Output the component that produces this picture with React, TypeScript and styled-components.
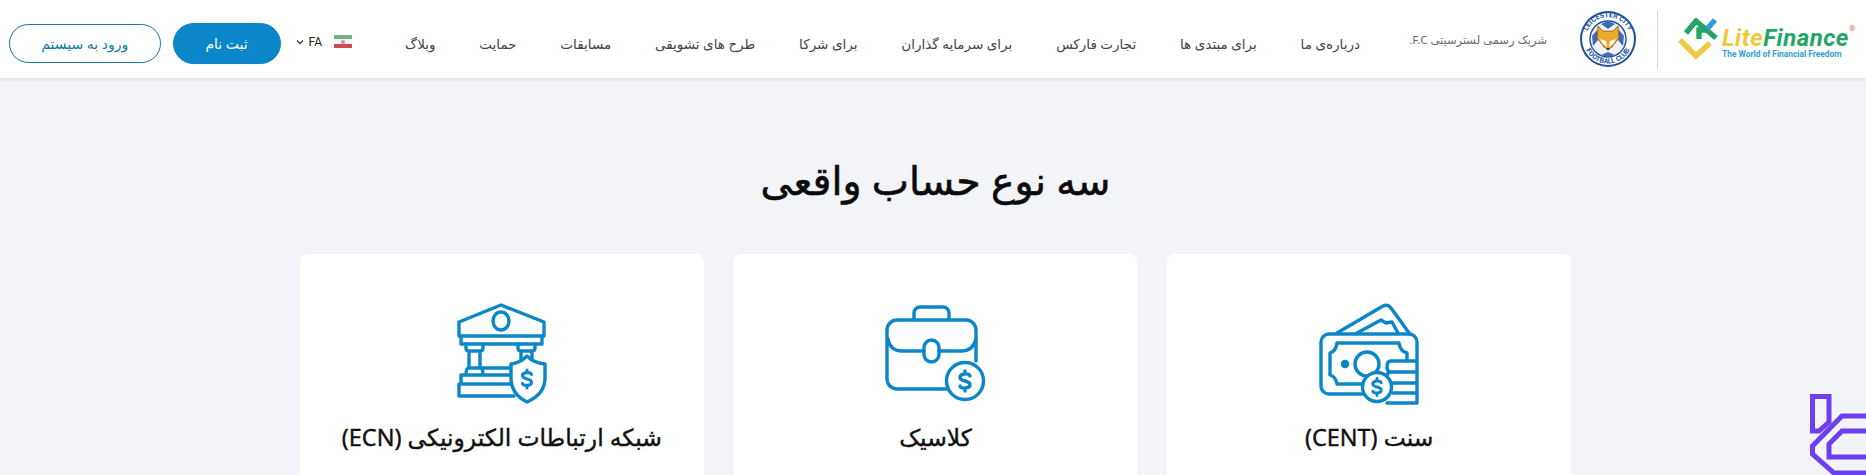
import React from 'react';
import styled, {createGlobalStyle} from 'styled-components';

const BLUE = '#0b86c8';
const ARABIC = '"Noto Sans", "DejaVu Sans", "Liberation Sans", sans-serif';

const GlobalStyle = createGlobalStyle`
  html, body {
    margin: 0;
    height: 475px;
    overflow: hidden;
    background: #f2f4f8;
    font-family: ${ARABIC};
  }
`;

const Page = styled.div`
  position: relative;
  width: 1866px;
  height: 475px;
  overflow: hidden;
  direction: rtl;
`;

const Header = styled.header`
  height: 78px;
  box-sizing: border-box;
  padding: 0 16px 0 9px;
  background: #fff;
  box-shadow: 0 1px 5px rgba(40, 50, 70, 0.12);
  display: flex;
  align-items: center;
`;

const Brand = styled.a`
  direction: ltr;
  display: flex;
  align-items: center;
  gap: 2px;
  width: 172px;
  height: 41px;
`;

const BrandText = styled.div`
  display: flex;
  flex-direction: column;
  font-family: Roboto, "Liberation Sans", sans-serif;
  margin-top: 8px;
`;

const BrandName = styled.div`
  font-size: 24px;
  line-height: 22px;
  font-weight: 700;
  font-style: italic;
  letter-spacing: 0.5px;
  color: #23a566;
  white-space: nowrap;
  display: flex;

  span {
    color: #f0c83c;
  }

  sup {
    font-size: 8px;
    line-height: 8px;
    font-style: normal;
    font-weight: 400;
    color: #e2604f;
    margin: -2px 0 0 0;
    letter-spacing: 0;
  }
`;

const BrandSlogan = styled.div`
  font-size: 8.4px;
  line-height: 11px;
  font-weight: 700;
  color: #2f9ed8;
  white-space: nowrap;
`;

const Divider = styled.div`
  width: 1px;
  height: 59px;
  margin: 0 20px;
  background: #d8d8d8;
`;

const Sponsor = styled.div`
  display: flex;
  align-items: center;
  gap: 32px;
  width: 198px;
`;

const SponsorText = styled.span`
  font-size: 11.5px;
  color: #6a6a6a;
  white-space: nowrap;
`;

const Nav = styled.nav`
  flex: 0 0 955px;
  margin: 9px 79px 0 0;
  display: flex;
  justify-content: space-between;
`;

const NavLink = styled.a`
  font-size: 13.5px;
  color: #444;
  white-space: nowrap;
`;

const Lang = styled.div`
  direction: ltr;
  display: flex;
  align-items: center;
  gap: 5px;
  margin: 5px 53px 0 0;
  font-size: 12px;
  font-family: Roboto, "Liberation Sans", sans-serif;
  font-weight: 400;
  color: #222;
`;

const Flag = styled.div`
  position: relative;
  width: 18px;
  height: 13px;
  margin-left: 7px;
  background: linear-gradient(#6fb088 0 33%, #f8f4f4 33% 66%, #cf4a55 66%);

  &::after {
    content: '';
    position: absolute;
    left: 7px;
    top: 4.5px;
    width: 4px;
    height: 4px;
    border-radius: 50%;
    background: #e58a92;
  }
`;

const Button = styled.a<{$solid?: boolean}>`
  box-sizing: border-box;
  display: flex;
  align-items: center;
  justify-content: center;
  white-space: nowrap;
  border-radius: 21px;
  font-size: 14px;
  height: ${p => (p.$solid ? 41 : 39)}px;
  width: ${p => (p.$solid ? 109 : 153)}px;
  margin: 9px ${p => (p.$solid ? 15 : 12)}px 0 0;
  background: ${p => (p.$solid ? BLUE : '#fff')};
  color: ${p => (p.$solid ? '#fff' : '#1278a8')};
  border: 1px solid ${p => (p.$solid ? BLUE : '#1278a8')};
`;

const Main = styled.main`
  padding: 0 295px 0 300px;
`;

const Heading = styled.h1`
  margin: 0;
  padding-top: 75px;
  height: 101px;
  font-size: 39.5px;
  line-height: 54px;
  font-weight: 400;
  -webkit-text-stroke: 0.6px #0b0b0b;
  text-align: center;
  color: #0b0b0b;
`;

const Cards = styled.div`
  display: grid;
  grid-template-columns: repeat(3, 1fr);
  gap: 30px;
`;

const Card = styled.section`
  height: 320px;
  padding-top: 50px;
  box-sizing: border-box;
  background: #fff;
  border-radius: 8px 8px 0 0;
  display: flex;
  flex-direction: column;
  align-items: center;
`;

const IconSlot = styled.div`
  height: 100px;
  display: flex;
  align-items: center;
  justify-content: center;
`;

const CardTitle = styled.h2`
  margin: 18px 0 0;
  font-size: 23.4px;
  line-height: 30px;
  font-weight: 400;
  -webkit-text-stroke: 0.4px #111;
  color: #111;
  white-space: nowrap;
`;

const IconSvg = styled.svg`
  fill: none;
  stroke: ${BLUE};
  stroke-width: 3.4;
  stroke-linejoin: round;
  stroke-linecap: round;
  display: block;
  overflow: visible;
`;

const Corner = styled.svg`
  position: absolute;
  right: 0;
  bottom: 0;
  fill: none;
  stroke: #6d3ff0;
  stroke-width: 5;
`;

const Dollar = ({x, y, s = 1}: {x: number; y: number; s?: number}) => (
  <g transform={`translate(${x} ${y}) scale(${s})`}>
    <path d="M5 -5 C4 -8 -5 -8 -5 -3.5 C-5 1 5 -1 5 3.5 C5 8 -4 8 -5 5 M0 -10 V-7 M0 7 V10" />
  </g>
);

const CentIcon = () => (
  <IconSvg width="100" height="100" viewBox="0 0 100 100">
    <path d="M18 29 L64 2 Q68 0 71 3 Q73 5 90 29" />
    <path d="M38 29 L62 16 L67 19 L73 18 L79 29" />
    <path d="M47 90 H10 a8 8 0 0 1 -8 -8 V38 a8 8 0 0 1 8 -8 H90 a8 8 0 0 1 8 8 V57" />
    <path d="M47 80 H18 Q17 73 11 71 V49 Q17 47 18 39 H80 Q81 47 88 49 V57" />
    <circle cx="48" cy="60" r="12" />
    <circle cx="26" cy="60" r="2.6" fill={BLUE} />
    <path d="M98 57 H72 Q68 57 68 62.5 Q68 68 72 68 H98 V57 M72 68 Q68 68 68 73 M98 68 V79 H73 M98 79 V89 H74 M98 89 V99 H68" />
    <circle cx="58" cy="83" r="14.5" fill="#fff" />
    <Dollar x={58} y={83} s={0.85} />
  </IconSvg>
);

const CaseIcon = () => (
  <IconSvg width="100" height="96" viewBox="0 0 100 96">
    <path d="M28 13 V7 a6 6 0 0 1 6 -6 H57 a6 6 0 0 1 6 6 V13" />
    <path d="M60 83 H11 a10 10 0 0 1 -10 -10 V24 a10 10 0 0 1 10 -10 H80 a10 10 0 0 1 10 10 V55" />
    <path d="M2 33 Q4 45 16 45 H38 M53 45 H75 Q87 45 90 33" />
    <rect x="38" y="34" width="15" height="22" rx="7.5" />
    <circle cx="79" cy="75" r="18.5" fill="#fff" />
    <Dollar x={79} y={75} s={1} />
  </IconSvg>
);

const BankIcon = () => (
  <IconSvg width="88" height="100" viewBox="0 0 88 100">
    <path d="M43 1 L1 18 V32 H86 V18 Z" />
    <ellipse cx="43" cy="17" rx="8" ry="9" />
    <path d="M3 32 V40 H84 V32" />
    <path d="M8 40 V44 Q8 47 11 47 H22 Q25 47 25 44 V40 M11 47 V64 M22 47 V64" />
    <path d="M60 40 V44 Q60 47 63 47 H74 Q77 47 77 44 V40 M63 47 V56 M74 47 V54" />
    <path d="M53 64 H11 Q8 64 8 71 M22 64 Q25 64 25 71 M3 80 V71 H53 M1 80 H56 M1 80 V92 H56" />
    <path d="M69 52 Q62 59 53 60 V74 Q53 90 69 98 Q87 90 87 74 V60 Q76 59 69 52 Z" fill="#fff" />
    <Dollar x={69} y={75} s={0.9} />
  </IconSvg>
);

const LiteMark = () => (
  <svg width="42" height="42" viewBox="0 0 42 42" fill="none" strokeWidth="5.4" style={{flex: 'none'}}>
    <path d="M2 22 L18 38 L32 25" stroke="#f2c744" />
    <path d="M8 15 L18 3 L38 20" stroke="#22a566" />
    <path d="M21 21 V12 H32" stroke="#22a566" />
    <path d="M29 11 L37 2" stroke="#2f9ed8" />
  </svg>
);

const FoxBadge = () => (
  <svg width="58" height="58" viewBox="0 0 58 58" style={{flex: 'none'}}>
    <defs>
      <path id="arcTop" d="M7 29 A22 22 0 0 1 51 29" />
      <path id="arcBottom" d="M4.5 29 A24.5 24.5 0 0 0 53.5 29" />
    </defs>
    <circle cx="29" cy="29" r="28" fill="#1d4f9f" />
    <circle cx="29" cy="29" r="26" fill="#fff" />
    <circle cx="29" cy="29" r="18" fill="#f2f4f8" stroke="#1d4f9f" strokeWidth="1.4" />
    <path d="M29 11 L36 14 L29 19 L22 14 Z M13 26 L18 20 L19 30 L14 36 Z M45 26 L40 20 L39 30 L44 36 Z M22 45 L29 42 L36 45 L29 47 Z" fill="#3b6db5" />
    <text fontFamily="Roboto, sans-serif" fontSize="7" fontWeight="700" fill="#1d4f9f" textAnchor="middle">
      <textPath href="#arcTop" startOffset="50%">LEICESTER CITY</textPath>
    </text>
    <text fontFamily="Roboto, sans-serif" fontSize="7" fontWeight="700" fill="#1d4f9f" textAnchor="middle">
      <textPath href="#arcBottom" startOffset="50%">FOOTBALL CLUB</textPath>
    </text>
    <path d="M19 16 L24 21 H34 L39 16 L40 28 L33 37 L29 40 L25 37 L18 28 Z" fill="#eca72c" stroke="#7a4a12" strokeWidth="0.7" />
    <path d="M21 29 L27 31 L28 37 L24 34 Z M37 29 L31 31 L30 37 L34 34 Z" fill="#fff" />
    <path d="M27.5 38 H30.5 L29 40.5 Z" fill="#222" />
  </svg>
);

const CornerLogo = () => (
  <Corner width="56" height="81" viewBox="0 0 56 81">
    <path d="M2.5 2.5 H19 V28 L9 37 H2.5 Z" />
    <path d="M56 22 H32 L2.5 52 V60 L24 79 H56" />
    <path d="M56 37 H32 L19 50 V63 H56" />
  </Corner>
);

const NAV_ITEMS = [
  'درباره‌ی ما',
  'برای مبتدی ها',
  'تجارت فارکس',
  'برای سرمایه گذاران',
  'برای شرکا',
  'طرح های تشویقی',
  'مسابقات',
  'حمایت',
  'وبلاگ',
];

const App = () => {
  return (
    <Page>
      <GlobalStyle />
      <Header>
        <Brand>
          <LiteMark />
          <BrandText>
            <BrandName><span>Lite</span>Finance<sup>®</sup></BrandName>
            <BrandSlogan>The World of Financial Freedom</BrandSlogan>
          </BrandText>
        </Brand>
        <Divider />
        <Sponsor>
          <FoxBadge />
          <SponsorText>شریک رسمی لسترسیتی F.C.</SponsorText>
        </Sponsor>
        <Nav>
          {NAV_ITEMS.map(item => (
            <NavLink key={item}>{item}</NavLink>
          ))}
        </Nav>
        <Lang>
          <svg width="8" height="8" viewBox="0 0 8 8" fill="none" stroke="#222" strokeWidth="1.1">
            <path d="M1 2.5 L4 5.5 L7 2.5" />
          </svg>
          FA
          <Flag />
        </Lang>
        <Button $solid>ثبت نام</Button>
        <Button>ورود به سیستم</Button>
      </Header>
      <Main>
        <Heading>سه نوع حساب واقعی</Heading>
        <Cards>
          <Card>
            <IconSlot><CentIcon /></IconSlot>
            <CardTitle>سنت (CENT)</CardTitle>
          </Card>
          <Card>
            <IconSlot><CaseIcon /></IconSlot>
            <CardTitle>کلاسیک</CardTitle>
          </Card>
          <Card>
            <IconSlot><BankIcon /></IconSlot>
            <CardTitle>شبکه ارتباطات الکترونیکی (ECN)</CardTitle>
          </Card>
        </Cards>
      </Main>
      <CornerLogo />
    </Page>
  );
};

export default App;
